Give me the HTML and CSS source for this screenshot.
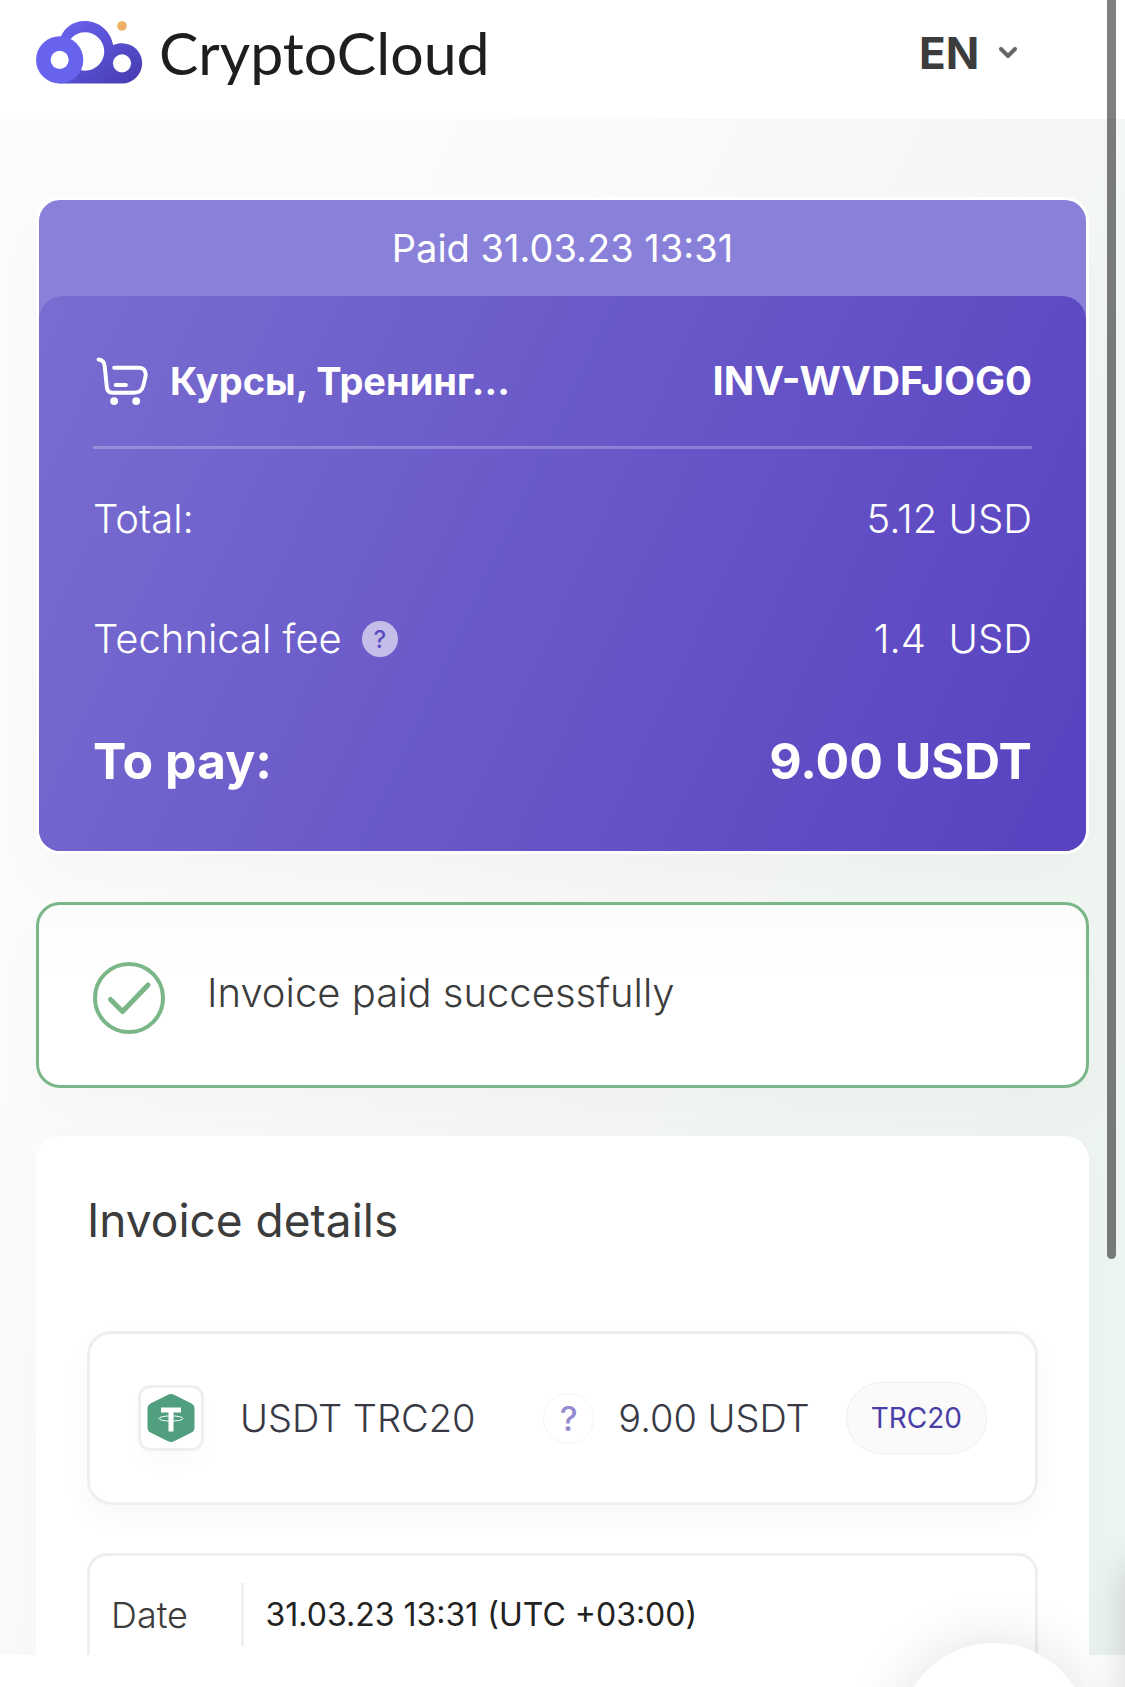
FILE: index.html
```
<!DOCTYPE html>
<html lang="en">
<head>
  <meta charset="UTF-8">
  <meta name="viewport" content="width=device-width, initial-scale=1.0">
  <title>CryptoCloud - Invoice</title>
  <link rel="stylesheet" href="styles.css">
</head>
<body>

  <header class="header">
    <a class="logo" href="#">
      <svg class="logo-icon" viewBox="0 0 107 64" aria-hidden="true">
        <defs>
          <linearGradient id="cloud" x1="0" y1="0" x2="1" y2="1">
            <stop offset="0" stop-color="#6a64f0"/>
            <stop offset="1" stop-color="#453aae"/>
          </linearGradient>
        </defs>
        <path fill="url(#cloud)" fill-rule="evenodd" d="M23 63.500V20C26 8 36 0 48.500 0C63 0 75 10 77.500 24.500C80.500 23 83.500 22.500 86.500 22.500A20.500 20.500 0 0 1 86.500 63.500ZM49 11.500A19.500 19.500 0 1 0 49 50.500A19.500 19.500 0 1 0 49 11.500Z"/>
        <circle cx="23.200" cy="39.500" r="24" fill="#6863ee"/>
        <circle cx="23.200" cy="39.500" r="9.200" fill="#fff"/>
        <circle cx="86.500" cy="43" r="9.200" fill="#fff"/>
        <circle cx="86.500" cy="5" r="4.800" fill="#f0b061"/>
      </svg>
      <span>CryptoCloud</span>
    </a>
    <label class="lang">
      <select aria-label="Language">
        <option selected>EN</option>
        <option>RU</option>
      </select>
      <svg class="chevron" viewBox="0 0 18 12" aria-hidden="true">
        <path d="M2 2l7 7 7-7"/>
      </svg>
    </label>
  </header>

  <main class="content">
    <section class="invoice">
      <p class="invoice-status">Paid 31.03.23 13:31</p>
      <div class="invoice-body">
        <div class="invoice-head">
          <svg class="cart" viewBox="0 0 52 49" aria-hidden="true">
            <path d="M2 2.500C6.500 3 8 5.500 8.300 9L10.500 31C11 35 13 36.500 16 36.500H38C43 36.500 46.500 34 47.500 30L50 20C51 14 48 11 43 11H18M19.500 28.500H30"/>
            <circle cx="18" cy="45" r="4"/>
            <circle cx="40.500" cy="45" r="4"/>
          </svg>
          <span class="shop">Курсы, Тренинг...</span>
          <span class="invoice-id">INV-WVDFJOG0</span>
        </div>
        <div class="invoice-rows">
          <div class="row">
            <span>Total:</span>
            <span>5.12 USD</span>
          </div>
          <div class="row">
            <span class="fee">Technical fee
              <button class="fee-help" type="button" aria-label="About the fee">?</button>
            </span>
            <span>1.4&nbsp; USD</span>
          </div>
          <div class="row row-total">
            <span>To pay:</span>
            <span>9.00 USDT</span>
          </div>
        </div>
      </div>
    </section>

    <section class="success">
      <svg class="check" viewBox="0 0 72 72" aria-hidden="true">
        <circle cx="36" cy="36" r="34"/>
        <path class="check-mark" d="M17.500 37.500l12 12L55 23"/>
      </svg>
      <p>Invoice paid successfully</p>
    </section>

    <section class="details">
      <h2>Invoice details</h2>
      <div class="method">
        <div class="coin">
          <svg viewBox="0 0 48 48" aria-hidden="true">
            <path fill="#509f7e" d="M20.500 1Q24 -1 27.500 1L44.500 9.500Q47.500 11 47.500 14.500V33.500Q47.500 37 44.500 38.500L27.500 47Q24 49 20.500 47L3.500 38.500Q.5 37 .5 33.500V14.500Q.5 11 3.500 9.500Z"/>
            <path fill="#fff" d="M14 13.500H34V18.500H26.500V37.500H21.500V18.500H14Z"/>
            <ellipse cx="24" cy="24.500" rx="12" ry="2.600" fill="none" stroke="#fff"/>
          </svg>
        </div>
        <span class="method-name">USDT TRC20</span>
        <button class="method-help" type="button" aria-label="About the network">?</button>
        <span class="amount">9.00 USDT</span>
        <span class="network">TRC20</span>
      </div>

      <div class="info">
        <table>
          <tr>
            <th scope="row">Date</th>
            <td>31.03.23 13:31 (UTC +03:00)</td>
          </tr>
        </table>
      </div>
    </section>
  </main>

  <div class="bottom-bar"></div>

  <div class="scroll-thumb"></div>
  <div class="chat-panel"></div>
  <button class="chat-button" type="button" aria-label="Chat"></button>

</body>
</html>
```
FILE: styles.css
```
* {
  margin: 0;
  padding: 0;
  box-sizing: border-box;
}

body {
  display: flex;
  flex-direction: column;
  height: 100vh;
  overflow: hidden;
  background: #fff;
  color: #3c3c3c;
  font-family: 'Inter', sans-serif;
  font-size: 40px;
  font-weight: 300;
  line-height: 50px;
}

button {
  border: none;
  font-family: inherit;
  cursor: pointer;
}

/* Header */
.header {
  display: flex;
  justify-content: space-between;
  align-items: center;
  flex-shrink: 0;
  padding: 21px 108px 35px 36px;
  background: #fff;
}

.logo {
  display: flex;
  align-items: center;
  gap: 16px;
  color: #1d1e20;
  font-family: 'Lato', sans-serif;
  font-size: 59px;
  font-weight: 400;
  line-height: 63px;
  text-decoration: none;
}

.logo-icon {
  width: 107px;
  height: 63px;
}

.lang {
  display: flex;
  align-items: center;
  gap: 18px;
}

.lang select {
  appearance: none;
  border: none;
  background: none;
  color: #3c3c3c;
  font-family: inherit;
  font-size: 44px;
  font-weight: 700;
}

.chevron {
  width: 18px;
  height: 12px;
  fill: none;
  stroke: #666;
  stroke-width: 4;
  stroke-linecap: round;
  stroke-linejoin: round;
}

/* Page */
.content {
  display: flex;
  flex-direction: column;
  flex: 1;
  gap: 48px;
  min-height: 0;
  padding: 78px 36px 0;
  overflow: hidden;
  background: linear-gradient(115deg, #fbfbfb 25%, #f5f7f5 55%, #ecf4ef 90%);
}

.content > section {
  flex-shrink: 0;
}

/* Invoice card */
.invoice {
  border: 3px solid #fff;
  border-radius: 24px;
  background: #8981d9;
  box-shadow: 0 30px 60px rgba(0, 0, 0, 0.02);
  color: #fff;
}

.invoice-status {
  font-size: 38px;
  font-weight: 400;
  line-height: 96px;
  text-align: center;
}

.invoice-body {
  padding: 60px 54px 63px;
  border-radius: 24px 24px 21px 21px;
  background: linear-gradient(115deg, #786dd0, #5842c0);
}

.invoice-head {
  display: flex;
  align-items: center;
  padding-bottom: 40px;
  border-bottom: 3px solid rgba(255, 255, 255, 0.25);
  font-weight: 700;
}

.shop {
  font-size: 38px;
}

.cart {
  width: 52px;
  height: 48px;
  margin: 0 22px 0 3px;
  fill: none;
  stroke: #fff;
  stroke-width: 4;
  stroke-linecap: round;
}

.cart circle {
  fill: #fff;
  stroke: none;
}

.invoice-id {
  margin-left: auto;
}

.invoice-rows {
  display: flex;
  flex-direction: column;
  gap: 70px;
  padding-top: 45px;
}

.row {
  display: flex;
  justify-content: space-between;
}

.row-total {
  font-size: 50px;
  font-weight: 700;
  line-height: 54px;
}

.fee {
  display: flex;
  align-items: center;
  gap: 20px;
}

.fee-help {
  width: 36px;
  height: 36px;
  border-radius: 50%;
  background: #c4bdea;
  color: #5e4dc0;
  font-size: 24px;
  font-weight: 500;
}

/* Success message */
.success {
  display: flex;
  align-items: flex-start;
  gap: 42px;
  padding: 57px 54px 51px;
  border: 3px solid #7ab687;
  border-radius: 24px;
  background: linear-gradient(#fcfcfc, #fff 40%);
  box-shadow: 0 30px 60px rgba(0, 0, 0, 0.02);
  line-height: 62px;
}

.check {
  width: 72px;
  height: 72px;
  fill: none;
  stroke: #7ab687;
  stroke-width: 4;
}

.check-mark {
  stroke-width: 5;
  stroke-linecap: round;
  stroke-linejoin: round;
}

/* Details */
.details {
  padding: 54px 51px;
  border-radius: 24px;
  background: #fff;
  box-shadow: 0 0 60px rgba(0, 0, 0, 0.01);
}

.details h2 {
  margin-bottom: 81px;
  font-size: 46px;
  font-weight: 400;
  line-height: 60px;
}

.method {
  display: flex;
  align-items: center;
  padding: 48px;
  border: 3px solid #efefef;
  border-radius: 24px;
  box-shadow: 0 12px 30px rgba(0, 0, 0, 0.03);
  color: #383944;
  font-size: 38px;
}

.coin {
  display: flex;
  align-items: center;
  justify-content: center;
  width: 66px;
  height: 66px;
  margin-right: 36px;
  border: 3px solid #efefef;
  border-radius: 12px;
  box-shadow: 0 12px 24px rgba(0, 0, 0, 0.02);
}

.coin svg {
  width: 48px;
  height: 48px;
}

.method-help {
  width: 51px;
  height: 51px;
  margin: 0 24px 0 auto;
  border: 1px solid #f4f4f4;
  border-radius: 50%;
  background: #fff;
  color: #948bd0;
  font-size: 34px;
  font-weight: 500;
}

.network {
  margin-left: 36px;
  padding: 0 24px;
  border: 1px solid #efefef;
  border-radius: 36px;
  background: #fafafa;
  color: #4a3fa8;
  font-size: 28px;
  font-weight: 400;
  line-height: 70px;
}

.info {
  margin-top: 48px;
  padding: 27px 21px;
  border: 3px solid #efefef;
  border-radius: 20px;
}

.info table {
  border-collapse: collapse;
}

.info th {
  width: 131px;
  font-size: 36px;
  font-weight: 300;
  text-align: left;
}

.info td {
  height: 63px;
  padding-left: 22px;
  border-left: 3px solid #efefef;
  color: #222;
  font-size: 32px;
  font-weight: 400;
}

.bottom-bar {
  flex-shrink: 0;
  height: 32px;
  background: #fff;
}

/* Floating elements */
.scroll-thumb {
  position: fixed;
  top: -10px;
  right: 9px;
  width: 9px;
  height: 75.2vh;
  border-radius: 5px;
  background: rgba(0, 0, 0, 0.5);
}

.chat-panel {
  position: fixed;
  bottom: -60px;
  left: 100%;
  width: 300px;
  height: 180px;
  box-shadow: 0 0 36px rgba(0, 0, 0, 0.16);
}

.chat-button {
  position: fixed;
  right: 35px;
  bottom: -148px;
  width: 192px;
  height: 192px;
  border-radius: 50%;
  background: #fff;
  box-shadow: 0 0 60px rgba(0, 0, 0, 0.12);
}
```
